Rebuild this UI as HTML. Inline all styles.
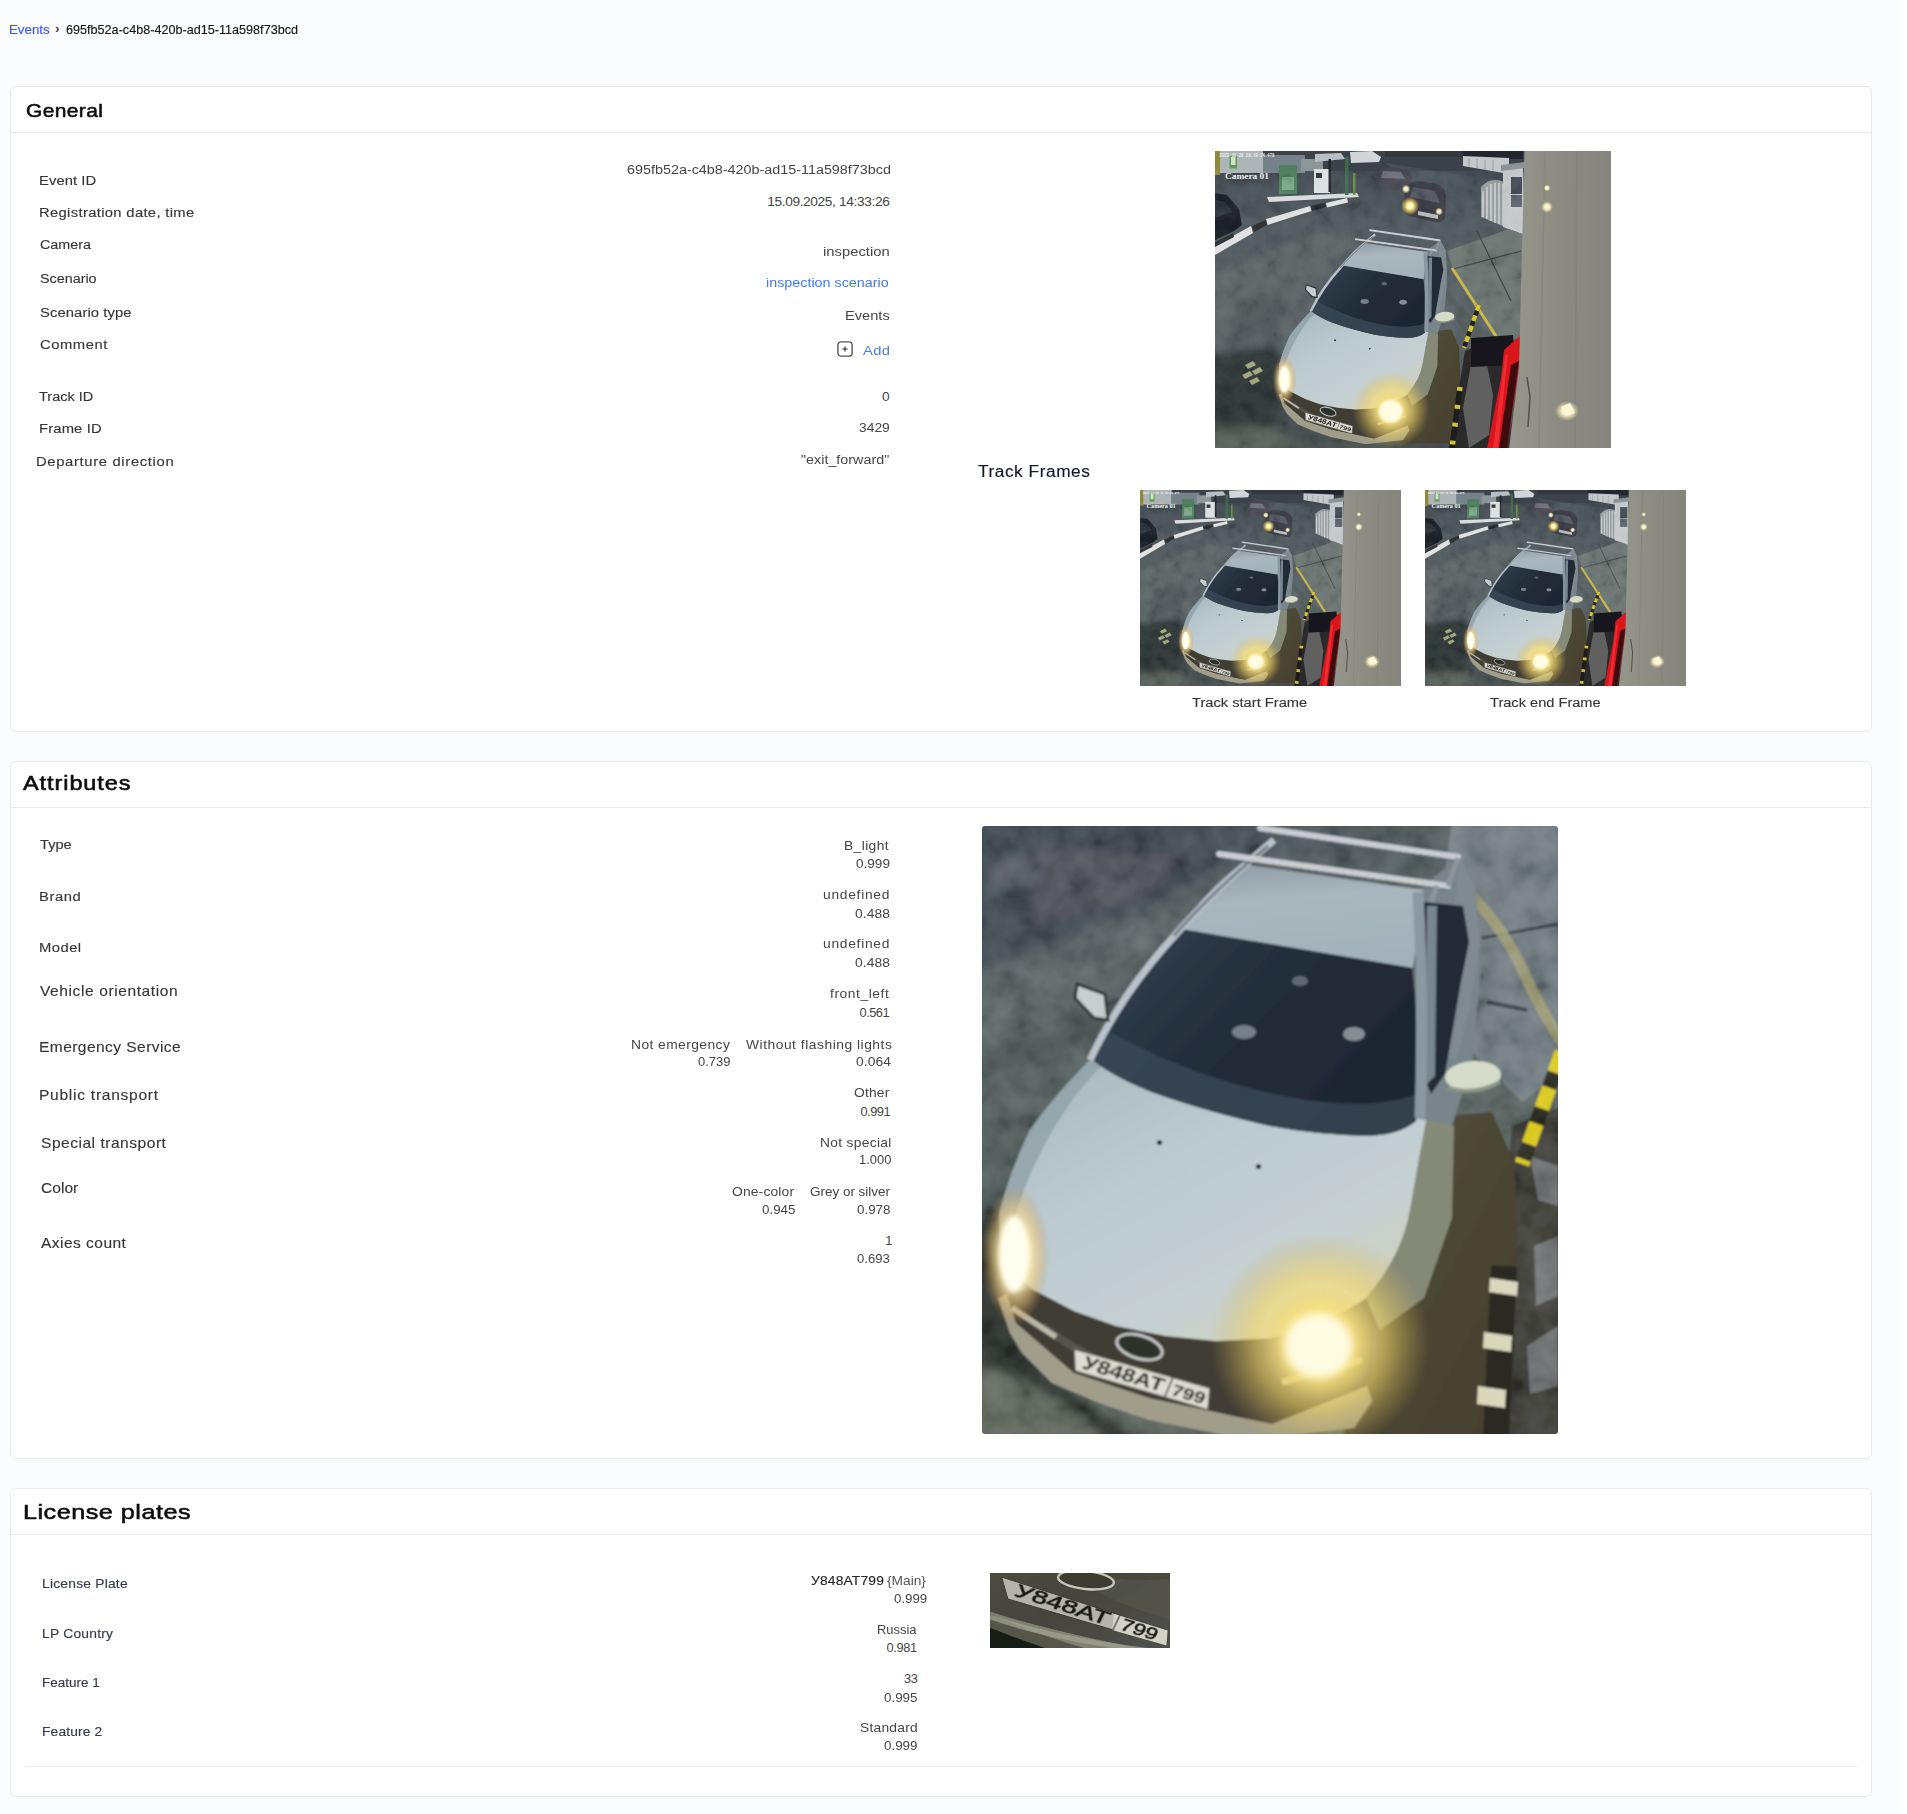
<!DOCTYPE html>
<html lang="en"><head><meta charset="utf-8"><title>Event</title>
<style>
html,body{margin:0;padding:0}
body{width:1907px;height:1814px;position:relative;overflow:hidden;background:#fff;font-family:"Liberation Sans",sans-serif;}
.bg{position:absolute;left:0;top:0;width:1901px;height:1814px;background:#fbfcfe}
.card{position:absolute;left:10px;width:1860px;background:#fff;border:1px solid #e9e9ea;border-radius:6px;}
.hl{position:absolute;height:1px;background:#e9e9ea}
.t{position:absolute;white-space:nowrap;line-height:1;transform-origin:0 0;}
.img{position:absolute;display:block}

</style></head><body>
<svg width="0" height="0" style="position:absolute">
<defs>
<filter id="b06" x="-5%" y="-5%" width="110%" height="110%"><feGaussianBlur stdDeviation="0.6"/></filter>
<filter id="b1" x="-20%" y="-20%" width="140%" height="140%"><feGaussianBlur stdDeviation="1.2"/></filter>
<filter id="b2" x="-30%" y="-30%" width="160%" height="160%"><feGaussianBlur stdDeviation="2.5"/></filter>
<filter id="b4" x="-40%" y="-40%" width="180%" height="180%"><feGaussianBlur stdDeviation="5"/></filter>
<filter id="b8" x="-50%" y="-50%" width="200%" height="200%"><feGaussianBlur stdDeviation="9"/></filter>
<filter id="b16" x="-50%" y="-50%" width="200%" height="200%"><feGaussianBlur stdDeviation="16"/></filter>
<filter id="nzL" x="0" y="0" width="100%" height="100%"><feTurbulence type="fractalNoise" baseFrequency="0.035" numOctaves="3" seed="7"/><feColorMatrix type="matrix" values="1.6 0 0 0 -0.3  1.6 0 0 0 -0.3  1.6 0 0 0 -0.3  0 0 0 0 1"/></filter>
<filter id="nzS" x="0" y="0" width="100%" height="100%"><feTurbulence type="fractalNoise" baseFrequency="0.06" numOctaves="3" seed="5"/><feColorMatrix type="matrix" values="1.6 0 0 0 -0.3  1.6 0 0 0 -0.3  1.6 0 0 0 -0.3  0 0 0 0 1"/></filter>
<filter id="nzH" x="0" y="0" width="100%" height="100%"><feTurbulence type="fractalNoise" baseFrequency="0.55" numOctaves="2" seed="11"/><feColorMatrix type="matrix" values="1.4 0 0 0 -0.2  1.4 0 0 0 -0.2  1.4 0 0 0 -0.2  0 0 0 0 1"/></filter>
<radialGradient id="glowY"><stop offset="0" stop-color="#fffef0"/><stop offset="0.35" stop-color="#fff2a0"/><stop offset="0.7" stop-color="#f0d060" stop-opacity="0.55"/><stop offset="1" stop-color="#e8c850" stop-opacity="0"/></radialGradient>
<radialGradient id="glowW"><stop offset="0" stop-color="#fffff4"/><stop offset="0.45" stop-color="#fff6c8" stop-opacity="0.9"/><stop offset="1" stop-color="#f0e0a0" stop-opacity="0"/></radialGradient>
<linearGradient id="wallG" x1="0" x2="1" y1="0" y2="0"><stop offset="0" stop-color="#96968c"/><stop offset="0.5" stop-color="#8b8b82"/><stop offset="1" stop-color="#84847c"/></linearGradient>
<linearGradient id="gndG" x1="0" x2="0" y1="0" y2="1"><stop offset="0" stop-color="#3b434a"/><stop offset="0.25" stop-color="#4d565b"/><stop offset="0.6" stop-color="#576062"/><stop offset="1" stop-color="#3f4749"/></linearGradient>
<linearGradient id="hoodS" x1="0" x2="1" y1="0" y2="1"><stop offset="0" stop-color="#b3c0c4"/><stop offset="0.45" stop-color="#d3d8d8"/><stop offset="1" stop-color="#e4e0c4"/></linearGradient>
<linearGradient id="cgnd" x1="0" x2="0.3" y1="0" y2="1"><stop offset="0" stop-color="#3c434c"/><stop offset="0.3" stop-color="#505a5a"/><stop offset="0.7" stop-color="#545f5c"/><stop offset="1" stop-color="#555e56"/></linearGradient>
<linearGradient id="choodL" x1="0.1" x2="0.9" y1="0" y2="1"><stop offset="0" stop-color="#a9b8bf"/><stop offset="0.35" stop-color="#bccacf"/><stop offset="0.7" stop-color="#c6d0d2"/><stop offset="1" stop-color="#d6d2b0"/></linearGradient>
<linearGradient id="croof" x1="0" x2="0.2" y1="0" y2="1"><stop offset="0" stop-color="#8f9ba4"/><stop offset="0.4" stop-color="#a9b6be"/><stop offset="1" stop-color="#a3b2ba"/></linearGradient>
<linearGradient id="cglass" x1="0" x2="1" y1="0.2" y2="0.8"><stop offset="0" stop-color="#33414f"/><stop offset="0.4" stop-color="#242e3a"/><stop offset="1" stop-color="#1d2530"/></linearGradient>
<linearGradient id="cside" x1="0" x2="1" y1="0" y2="1"><stop offset="0" stop-color="#5c5d50"/><stop offset="0.45" stop-color="#4c4735"/><stop offset="1" stop-color="#454030"/></linearGradient>
<radialGradient id="cglowR"><stop offset="0" stop-color="#fffff2"/><stop offset="0.3" stop-color="#fff6b0"/><stop offset="0.6" stop-color="#f4d868" stop-opacity="0.7"/><stop offset="1" stop-color="#d8b850" stop-opacity="0"/></radialGradient>
<radialGradient id="cglowL"><stop offset="0" stop-color="#fffff4"/><stop offset="0.4" stop-color="#fff2c0" stop-opacity="0.95"/><stop offset="0.75" stop-color="#e8c070" stop-opacity="0.45"/><stop offset="1" stop-color="#c09050" stop-opacity="0"/></radialGradient>
<g id="carBody">
 <!-- car side in shadow -->
 <path d="M430 330 l30 -40 l50 -4 l22 50 l4 90 l-16 186 l-160 0 l18 -50 l0 -86 l34 -52z" fill="url(#cside)"/>
 <path d="M436 64 l42 -34 l16 30 l4 90 l-8 86 l-20 64 l-27 36 l-7 -44z" fill="#79858b"/>
 <path d="M478 30 l14 30 l6 60 l-10 60 l-14 56 l-14 -10 l10 -120z" fill="#7f8b91"/>
 <!-- side glass -->
 <path d="M441 76 l40 4 l6 36 l-8 40 l-16 92 l-14 20 l-8 -20z" fill="#222a34"/>
 <path d="M445 80 l10 0 l-2 170 l-10 10z" fill="#8696a0" opacity="0.85"/>
 <!-- bumper lip + grille -->
 <path d="M25 468 L33.500 496.600 L92 547 L167.500 572 L290 598 L385 560 L390 575 L372 602 L266 614 L167 594 L117 577 L70 557 L40 527 L28 507 L16 472 Z" fill="#a09e8b"/>
 <path d="M50 463 L92 485 L134 500 L184 510 L234 515 L288 512 L340 492 L395 470 L390 540 L385 560 L290 598 L167.500 572 L92 547 L33.500 496.600 L25 468 Z" fill="#413d35"/>
 <path d="M60 500 q60 44 130 62" stroke="#57544a" stroke-width="8" fill="none"/>
 <path d="M30 482 L74 511" stroke="#bbbaa8" stroke-width="5.500" fill="none"/>
 <path d="M300 556 l80 -22" stroke="#b7b294" stroke-width="6" fill="none"/>
 <path d="M444 294 L472 300 L470 392 L442 472 L398 504 L384 472 Q420 430 428 384 Z" fill="#858a78"/>
 <!-- hood -->
 <path d="M109 233 Q72 270 48 304 Q28 345 18 385 Q14 432 50 463 L92 485 L134 500 L184 510 L234 515 L288 512 Q340 500 384 472 Q420 430 428 384 L444 294 Z" fill="url(#choodL)"/>
 <path d="M109 233 Q72 270 48 304 Q28 345 18 385 Q16 415 24 436 Q30 380 62 320 Q90 268 120 240 Z" fill="#8e9da4" opacity="0.75"/>
 <!-- windshield -->
 <path d="M200 103 L430 141 Q440 221 434 295 Q418 309 384 310 Q330 308 288 300 Q218 284 167 265 Q130 250 109 233 Q140 160 200 103 Z" fill="url(#cglass)"/>
 <path d="M109 233 Q130 250 167 265 Q218 284 288 300 Q330 308 384 310 Q418 309 434 295 L435 268 Q400 282 340 276 Q230 262 128 206 Z" fill="#3b4856" opacity="0.8"/>
 <ellipse cx="262" cy="206" rx="12" ry="7" fill="#9aa4ac" opacity="0.7"/><ellipse cx="372" cy="208" rx="11" ry="7" fill="#a8b0b4" opacity="0.75"/><ellipse cx="318" cy="155" rx="8" ry="5" fill="#8a949c" opacity="0.6"/>
 <!-- roof -->
 <path d="M259 38 l182 26 l-10 78 l-231 -39 q20 -36 59 -65z" fill="url(#croof)"/>
 <path d="M292 14 q-60 50 -96 92 q-56 60 -88 128" stroke="#b9c2ca" stroke-width="7" fill="none"/>
 <path d="M286 20 q-60 50 -94 90" stroke="#5a646c" stroke-width="3" fill="none" opacity="0.7"/>
 <path d="M436 66 q6 110 2 226" stroke="#8a98a2" stroke-width="11" fill="none"/>
 <!-- roof bars -->
 <path d="M278 2 l198 29 M237 28 l229 32" stroke="#c9ced2" stroke-width="6" stroke-linecap="round" fill="none"/>
 <path d="M278 6 l198 29 M237 32 l229 32" stroke="#5e666c" stroke-width="2" fill="none" opacity="0.7"/>
 <path d="M466 60 l10 -28 M455 60 l-6 16" stroke="#8d969c" stroke-width="5" fill="none"/>
 <!-- mirrors -->
 <path d="M95 158 l28 10 l3 26 l-14 -2 l-19 -20z" fill="#c5cfcf" stroke="#2f3538" stroke-width="3"/>
 <ellipse cx="491" cy="250" rx="28" ry="15" fill="#d5dcc9" transform="rotate(-4 491 250)"/>
 <path d="M466 262 q26 8 52 -6" stroke="#8c9686" stroke-width="4" fill="none"/>
 <!-- hood dots -->
 <circle cx="177.500" cy="316.500" r="2.600" fill="#1c2228"/><circle cx="276.500" cy="340.500" r="2.600" fill="#1c2228"/>
 <!-- logo + plate -->
 <ellipse cx="157.500" cy="521" rx="23.500" ry="11.500" fill="#2e302b" stroke="#c2c6c4" stroke-width="3" transform="rotate(17 157.500 521)"/>
 <path d="M92 523 L228 562 L226 584 L93 545 Z" fill="#dcdcd2" stroke="#55554b" stroke-width="1.500"/>
 <g transform="translate(99 542) rotate(16.500) skewX(-6)"><text x="0" y="0" font-family="Liberation Sans, sans-serif" font-weight="700" font-size="19" fill="#20201d" textLength="84" lengthAdjust="spacingAndGlyphs">У848АТ</text><text x="93" y="0" font-family="Liberation Sans, sans-serif" font-weight="700" font-size="16" fill="#20201d" textLength="34" lengthAdjust="spacingAndGlyphs">799</text><path d="M89 -17 l0 21" stroke="#444" stroke-width="1.500"/></g>
</g>
<g id="carGlow">
 <!-- glows -->
 <circle cx="338" cy="516" r="110" fill="url(#cglowR)" opacity="0.85"/>
 <circle cx="338" cy="518" r="58" fill="url(#cglowR)"/>
 <ellipse cx="336" cy="520" rx="34" ry="32" fill="#fffce4" filter="url(#b4)"/>
 <ellipse cx="33" cy="430" rx="34" ry="70" fill="url(#cglowL)"/>
 <ellipse cx="32" cy="428" rx="14" ry="38" fill="#fffff0" filter="url(#b2)"/>
</g>

<clipPath id="sceneClip"><rect x="0" y="0" width="396" height="297"/></clipPath>

<symbol id="scene" viewBox="0 0 396 297" preserveAspectRatio="none">
<g clip-path="url(#sceneClip)">
<g filter="url(#b06)">
 <rect x="-2" y="-2" width="400" height="301" fill="url(#gndG)"/>
 <!-- far background -->
 <rect x="-2" y="-2" width="310" height="22" fill="#3a434a"/>
 <rect x="0" y="0" width="48" height="22" fill="#aeb5b7"/>
 <rect x="14.500" y="4" width="7.500" height="13.500" fill="#5f9a58"/>
 <rect x="16" y="6" width="4.500" height="8" fill="#cfe3c8"/>
 <rect x="0" y="0" width="5" height="24" fill="#8f8a3a"/>
 <rect x="48" y="4" width="42" height="18" fill="#76828a"/>
 <rect x="86" y="8" width="22" height="12" fill="#8c979a"/>
 <path d="M100 3 l26 -1 l4 6 l-30 3z" fill="#b9bec2"/>
 <path d="M135 1 l22 -1 l9 6 l-2 5 l-28 1z" fill="#d2d6da"/>
 <rect x="170" y="0" width="80" height="6" fill="#30373d"/>
 <rect x="248" y="0" width="60" height="8" fill="#23282d"/>
 <path d="M248 5 l46 2 l0 16 l-46 -8z" fill="#c4c8cb"/>
 <path d="M254 8 l0 8 M262 8 l0 9 M270 9 l0 10 M278 9 l0 11" stroke="#8b9094" stroke-width="0.800" fill="none"/>
 <path d="M170 12 l90 14 l30 40 l-20 6 l-60 -30z" fill="#4c555b" opacity="0.7"/>
 <!-- left parked dark car -->
 <path d="M-2 42 l14 2 l12 14 l3 16 l-8 6 l-21 10z" fill="#1c2027"/>
 <path d="M-2 48 l12 3 l8 10 l-20 6z" fill="#2b323b"/>
 <!-- pump island + pumps -->
 <path d="M52 46 l90 -4 l2 4 l-90 5z" fill="#d8dadb"/>
 <path d="M0 95 l36 -20 l2 7 l-38 22z" fill="#dfe1e1"/>
 <path d="M0 91 l18 -9 l1 4 l-19 10z" fill="#2a2d30"/>
 <path d="M51 68 l44 -13 l1.5 5 l-44 14z" fill="#dfe1e1"/>
 <path d="M111 52 l21 -5 l1 4.5 l-21 5z" fill="#dfe1e1"/>
 <path d="M37 75 l14 -6 l1 5 l-13 7z M96 55 l14 -3.5 l1 4.5 l-14 4z" fill="#2a2d30"/>
 <rect x="64" y="14" width="18" height="29" fill="#4f7f5f"/>
 <rect x="67" y="26" width="12" height="13" fill="#7fa88a"/>
 <rect x="99" y="18" width="16" height="24" fill="#dcdfe0"/>
 <rect x="101" y="22" width="6" height="5" fill="#33383c"/>
 <rect x="113.500" y="8" width="2.500" height="33" fill="#23282c"/>
 <rect x="130" y="6" width="3.500" height="38" fill="#3d6b4c"/>
 <rect x="138" y="22" width="2.500" height="22" fill="#5d8a3c"/>
 <!-- cars in the middle distance -->
 <path d="M162 24 q2 -8 14 -8 l14 2 q6 2 7 8 l-2 12 l-30 2z" fill="#47464f"/>
 <path d="M168 20 l18 1 l4 7 l-24 -1z" fill="#6a6c78"/>
 <path d="M190 40 q2 -10 14 -10 l18 3 q8 3 9 12 l-1 22 q-2 5 -10 4 l-26 -6 q-5 -2 -5 -8z" fill="#3a3b44"/>
 <path d="M198 36 l22 4 l5 12 l-30 -6z" fill="#555864"/>
 <path d="M203 60 l20 4 l0 4 l-20 -4z" fill="#b7b9b9"/>
 <!-- fence / booth -->
 <path d="M266 36 q12 -12 24 -4 l0 44 l-24 -10z" fill="#aeb2b4" opacity="0.75"/>
 <path d="M268 40 l0 26 M272 36 l0 32 M276 33 l0 37 M280 32 l0 40 M284 32 l0 41 M288 33 l0 41" stroke="#e4e6e6" stroke-width="1.100" fill="none"/>
 <path d="M288 18 l20 -2 l2 68 l-22 -8z" fill="#c3c7ca"/>
 <rect x="296" y="26" width="11" height="17" fill="#454c54"/>
 <rect x="296" y="44" width="11" height="12" fill="#59616a"/>
 <path d="M286 14 l24 -3 l0 6 l-24 3z" fill="#8d9296"/>
 <!-- concrete slab right of car -->
 <path d="M232 100 l62 -22 l16 6 l-2 104 l-28 0 l-42 -70z" fill="#69726f"/>
 <path d="M238 118 l68 -18 M262 80 l34 70" stroke="#3a4244" stroke-width="1.200" fill="none"/>
 <path d="M238 150 l44 38 l-30 2 l-10 -20z" fill="#525a5a"/>
 <!-- ground tints -->
 <g filter="url(#b4)">
 <path d="M0 120 l110 -40 l40 6 l-70 60 l-80 40z" fill="#626b6a" opacity="0.5"/>
 <path d="M-10 205 l70 -10 l14 40 l-10 36 l-40 16 l-34 0z" fill="#2a3231" opacity="0.95"/>
 <path d="M-10 280 l60 -6 l60 30 l-120 0z" fill="#58625a" opacity="0.9"/>
 <path d="M60 290 l140 0 l0 14 l-140 0z" fill="#474f4c"/>
 <path d="M20 150 l60 -20 l-20 50 l-50 20z" fill="#4a5355" opacity="0.7"/>
 </g>
 <path d="M30 214 l8 -4 l3 4 l-8 4z M37 220 l8 -4 l3 4 l-8 4z M27 224 l8 -4 l3 4 l-8 4z M34 230 l8 -4 l3 4 l-8 4z" fill="#9fa37c"/>
 <rect x="0" y="20" width="310" height="277" filter="url(#nzS)" style="mix-blend-mode:soft-light" opacity="0.2"/>
 <g transform="translate(58 78.500) scale(0.3497)"><use href="#carBody"/></g>
 <!-- yellow line + striped pole -->
 <path d="M237 117 l44 68" stroke="#c9b948" stroke-width="3" fill="none"/>
 <path d="M264 154 l-15 43" stroke="#222" stroke-width="4.500" fill="none"/>
 <path d="M264 154 l-15 43" stroke="#d8c62e" stroke-width="4.500" stroke-dasharray="6 5" fill="none"/>
 <!-- dark wet area + bollards -->
 <path d="M250 200 l30 -14 l20 4 l-6 107 l-60 0z" fill="#2b2c2b"/>
 <path d="M256 214 l16 0 l6 30 l-4 40 l-20 13 l-6 -40z" fill="#6d6f6c" opacity="0.8"/>
 <path d="M245 236 l-8 61" stroke="#1d1d1b" stroke-width="5.500" fill="none"/>
 <path d="M245 236 l-8 61" stroke="#d3c238" stroke-width="5.500" stroke-dasharray="4 14" fill="none"/>
 <path d="M256 187 l42 -3 l2 30 l-44 2z" fill="#15161a"/>
 <!-- red barrier -->
 <path d="M289 199 l17 -15 l2 6 l-4 26 l-12 81 l-20 0 l14 -70z" fill="#d8121f"/>
 <path d="M290 205 l3 -2 l-10 94 l-5 0z" fill="#ff3a3a" opacity="0.65"/>
 <path d="M296 214 l8 -4 l-12 87 l-8 0z" fill="#23100f" opacity="0.85"/>
 <!-- wall -->
 <path d="M309.500 -2 l90 0 l0 301 l-105.500 0 l10 -82z" fill="url(#wallG)"/>
 <path d="M330 0 l-6 297 M362 0 l-2 297" stroke="#7d7d75" stroke-width="1.500" opacity="0.5" fill="none"/>
 <path d="M312 226 l3 20 l-2 30" stroke="#55554e" stroke-width="1.600" fill="none"/>
</g>
 <g transform="translate(58 78.500) scale(0.3497)"><use href="#carGlow"/></g>
 <!-- glows -->
 <circle cx="195" cy="55" r="9" fill="url(#glowY)"/>
 <circle cx="224" cy="60.500" r="4" fill="url(#glowW)"/>
 <circle cx="191" cy="38" r="4.500" fill="url(#glowW)"/>
 <circle cx="332" cy="56" r="6" fill="url(#glowW)"/>
 <circle cx="332" cy="37" r="3.500" fill="url(#glowW)"/>
 <ellipse cx="352" cy="260" rx="12" ry="10" fill="url(#glowW)"/>
 <path d="M346 256 l9 -4 l5 10 l-8 2z" fill="#fff8d8" filter="url(#b06)"/>
 <!-- overlay text -->
 <text x="10" y="27.500" font-family="Liberation Serif, serif" font-weight="700" font-size="8.600" fill="#f4f4f4" textLength="44" lengthAdjust="spacingAndGlyphs">Camera 01</text>
 <text x="4.500" y="5.500" font-family="Liberation Mono, monospace" font-weight="700" font-size="4.600" fill="#f0f0f0" textLength="55" lengthAdjust="spacingAndGlyphs">2022-09-28 18:19:24.478</text>
</g>
</symbol>
</defs>
</svg>

<div class="bg"></div>
<div class="card" style="top:86px;height:644px"></div>
<div class="hl" style="left:11px;width:1860px;top:132px"></div>
<div class="card" style="top:761px;height:696px"></div>
<div class="hl" style="left:11px;width:1860px;top:807px"></div>
<div class="card" style="top:1488px;height:307px"></div>
<div class="hl" style="left:11px;width:1860px;top:1534px"></div>
<div class="hl" style="left:25px;width:1832px;top:1766px"></div>
<svg class="img" style="left:837.4px;top:341px" width="16" height="16" viewBox="0 0 16 16"><rect x="0.9" y="0.9" width="14.2" height="14.2" rx="3.2" fill="none" stroke="#555" stroke-width="1.4"/><path d="M8 5.4v5.2M5.4 8h5.200" stroke="#333" stroke-width="1.2" fill="none"/></svg>
<svg class="img" style="left:1215px;top:151px" width="396" height="297"><use href="#scene" width="396" height="297"/></svg>
<svg class="img" style="left:1140px;top:490px" width="261" height="196"><use href="#scene" width="261" height="196"/></svg>
<svg class="img" style="left:1425px;top:490px" width="261" height="196"><use href="#scene" width="261" height="196"/></svg>
<svg class="img" style="left:982px;top:826px;border-radius:3px" width="576" height="608" viewBox="0 0 576 608">
<g filter="url(#b1)">

 <rect x="-4" y="-4" width="584" height="616" fill="url(#cgnd)"/>
 <!-- asphalt patches (left) -->
 <g filter="url(#b4)">
 <path d="M-4 -4 l280 0 l-60 60 l-220 90z" fill="#3b424b" opacity="0.85"/>
 <path d="M60 20 l140 10 l-30 40 l-120 30z" fill="#57545a" opacity="0.55"/>
 <path d="M10 30 l60 -4 l-10 30 l-50 10z" fill="#5b606c" opacity="0.6"/>
 <path d="M-4 150 l200 -70 l20 20 l-220 110z" fill="#5e6867" opacity="0.6"/>
 <path d="M-4 235 l150 -60 l10 14 l-160 66z" fill="#3c4445" opacity="0.6"/>
 <path d="M-4 330 l100 -40 l-40 100 l-60 30z" fill="#4a5453" opacity="0.7"/>
 <path d="M-8 400 l30 -20 l-6 80 l30 70 l60 50 l60 40 l-174 0z" fill="#272b29" opacity="0.95"/>
 <path d="M-8 540 l40 10 l70 40 l20 30 l-130 0z" fill="#5b6459"/>
 </g>
 <path d="M120 180 l60 -22" stroke="#3d4546" stroke-width="5" fill="none" opacity="0.7"/>
 <!-- concrete right -->
 <path d="M470 -4 l110 0 l0 250 l-40 30 l-60 -60 l-20 -150z" fill="#6c777b"/>
 <path d="M500 112 l76 -14" stroke="#333b3e" stroke-width="3" fill="none"/>
 <path d="M505 176 l40 8" stroke="#333b3e" stroke-width="4" fill="none"/>
 <path d="M486 66 q40 40 60 90 q20 40 34 60" stroke="#9d9b72" stroke-width="11" fill="none" opacity="0.85"/>
 <!-- dark mottled right-bottom -->
 <path d="M530 300 l50 -20 l0 332 l-70 0 l10 -200z" fill="#3a3a35"/>
 <path d="M548 330 l28 10 l0 40 l-20 -6z M552 420 l24 -10 l0 60 l-22 10z M545 520 l31 -20 l0 60 l-28 8z" fill="#76787a" opacity="0.8"/>
 <!-- striped pole -->
 <path d="M580 226 l-40 112" stroke="#26261f" stroke-width="15" fill="none"/>
 <path d="M580 226 l-40 112" stroke="#d9c81f" stroke-width="15" stroke-dasharray="22 16" fill="none"/>
 <rect x="0" y="0" width="576" height="608" filter="url(#nzL)" style="mix-blend-mode:soft-light" opacity="0.38"/>
 <use href="#carBody"/>
 <!-- bollard -->
 <path d="M522 440 l-8 172" stroke="#2a2a24" stroke-width="26" fill="none"/>
 <path d="M508 452 l28 4 l-1 14 l-28 -4z M502 506 l28 4 l-1 16 l-28 -4z M496 560 l28 4 l-1 18 l-28 -4z" fill="#d9d8bd"/>
</g>
 <use href="#carGlow"/>
</svg>
<svg class="img" style="left:990px;top:1573px" width="180" height="75" viewBox="0 0 180 75">
<defs><linearGradient id="lpbg" x1="0" x2="1" y1="0" y2="0.6"><stop offset="0" stop-color="#4c4a40"/><stop offset="0.5" stop-color="#45443c"/><stop offset="1" stop-color="#4e4f48"/></linearGradient></defs>
<g filter="url(#b06)">
 <rect x="-2" y="-2" width="184" height="79" fill="url(#lpbg)"/>
 <path d="M-2 38 q60 20 184 44 l-184 0z" fill="#7f8070"/>
 <path d="M-2 40 q50 22 100 36 l-100 0z" fill="#55574a"/>
 <path d="M-2 54 q30 12 60 22 l-60 0z" fill="#181d16"/>
 <path d="M0 44 q70 24 180 36" stroke="#a3a594" stroke-width="5" fill="none" opacity="0.7"/>
 <path d="M100 0 q30 10 80 6 l0 40 q-40 -10 -70 -26z" fill="#56584f" opacity="0.6"/>
 <ellipse cx="96" cy="7" rx="28" ry="9" fill="#3a3a33" stroke="#c6c6ba" stroke-width="2.400" transform="rotate(6 96 7)"/>
 <path d="M11.600 4 L177.700 57.500 L176.400 72.600 L17.900 26 z" fill="#b4b4aa" stroke="#3d3d35" stroke-width="1"/>
 <path d="M124 41 L177.700 57.500 L176.400 72.600 L122 57 z" fill="#d2d2c8"/>
 <g filter="url(#b06)" transform="translate(23 22.500) rotate(17.600) skewX(-8)"><text x="0" y="0" font-family="Liberation Sans, sans-serif" font-weight="400" font-size="17.500" fill="#15150f" stroke="#15150f" stroke-width="0.500" textLength="98" lengthAdjust="spacingAndGlyphs">У848АТ</text><text x="111" y="0" font-family="Liberation Sans, sans-serif" font-weight="400" font-size="15.500" fill="#15150f" stroke="#15150f" stroke-width="0.400" textLength="38" lengthAdjust="spacingAndGlyphs">799</text><path d="M106 -17 l0 21" stroke="#444" stroke-width="1.300"/></g>
</g>
</svg>

<span class="t" style="left:9.34px;top:23.53px;font-size:12.6px;letter-spacing:0.000px;color:#3a56f5;transform:scaleX(1.0563);-webkit-text-stroke:0.14px;">Events</span>
<span class="t" style="left:55.20px;top:23.33px;font-size:12.6px;letter-spacing:0.000px;color:#333;font-weight:700;">›</span>
<span class="t" style="left:65.80px;top:23.53px;font-size:12.6px;letter-spacing:0.000px;color:#15151a;transform:scaleX(1.0020);-webkit-text-stroke:0.14px;">695fb52a-c4b8-420b-ad15-11a598f73bcd</span>
<span class="t" style="left:25.80px;top:101.22px;font-size:19.0px;letter-spacing:0.342px;color:#0c0c10;transform:scaleX(1.1034);-webkit-text-stroke:0.55px;">General</span>
<span class="t" style="left:23.20px;top:773.81px;font-size:19.6px;letter-spacing:0.763px;color:#0c0c10;transform:scaleX(1.2000);-webkit-text-stroke:0.55px;">Attributes</span>
<span class="t" style="left:23.00px;top:1501.12px;font-size:21.0px;letter-spacing:0.416px;color:#0c0c10;transform:scaleX(1.2000);-webkit-text-stroke:0.55px;">License plates</span>
<span class="t" style="left:38.62px;top:173.90px;font-size:13.7px;letter-spacing:0.062px;color:#363636;transform:scaleX(1.0800);-webkit-text-stroke:0.14px;">Event ID</span>
<span class="t" style="left:38.62px;top:206.10px;font-size:13.7px;letter-spacing:0.309px;color:#363636;transform:scaleX(1.0800);-webkit-text-stroke:0.14px;">Registration date, time</span>
<span class="t" style="left:39.70px;top:238.30px;font-size:13.7px;letter-spacing:0.000px;color:#363636;transform:scaleX(1.0495);-webkit-text-stroke:0.14px;">Camera</span>
<span class="t" style="left:39.70px;top:272.30px;font-size:13.7px;letter-spacing:0.000px;color:#363636;transform:scaleX(1.0476);-webkit-text-stroke:0.14px;">Scenario</span>
<span class="t" style="left:39.70px;top:305.90px;font-size:13.7px;letter-spacing:0.090px;color:#363636;transform:scaleX(1.0800);-webkit-text-stroke:0.14px;">Scenario type</span>
<span class="t" style="left:39.70px;top:338.20px;font-size:13.7px;letter-spacing:0.496px;color:#363636;transform:scaleX(1.0800);-webkit-text-stroke:0.14px;">Comment</span>
<span class="t" style="left:39.40px;top:389.80px;font-size:13.7px;letter-spacing:0.000px;color:#363636;transform:scaleX(1.0581);-webkit-text-stroke:0.14px;">Track ID</span>
<span class="t" style="left:38.52px;top:422.00px;font-size:13.7px;letter-spacing:0.140px;color:#363636;transform:scaleX(1.0800);-webkit-text-stroke:0.14px;">Frame ID</span>
<span class="t" style="left:36.22px;top:454.80px;font-size:13.7px;letter-spacing:0.613px;color:#363636;transform:scaleX(1.0800);-webkit-text-stroke:0.14px;">Departure direction</span>
<span class="t" style="left:626.60px;top:162.90px;font-size:13.7px;letter-spacing:0.000px;color:#454545;transform:scaleX(1.0488);">695fb52a-c4b8-420b-ad15-11a598f73bcd</span>
<span class="t" style="left:767.20px;top:194.90px;font-size:13.7px;letter-spacing:-0.357px;color:#454545;">15.09.2025, 14:33:26</span>
<span class="t" style="left:823.30px;top:244.80px;font-size:13.7px;letter-spacing:0.020px;color:#454545;transform:scaleX(1.0800);">inspection</span>
<span class="t" style="left:766.40px;top:275.90px;font-size:13.7px;letter-spacing:0.000px;color:#3b7bf2;transform:scaleX(1.0463);">inspection scenario</span>
<span class="t" style="left:845.03px;top:308.50px;font-size:13.7px;letter-spacing:0.000px;color:#454545;transform:scaleX(1.0683);">Events</span>
<span class="t" style="left:863.00px;top:343.50px;font-size:13.7px;letter-spacing:0.351px;color:#4a7af7;transform:scaleX(1.0800);">Add</span>
<span class="t" style="left:881.90px;top:389.90px;font-size:13.7px;letter-spacing:0.000px;color:#454545;">0</span>
<span class="t" style="left:859.00px;top:420.90px;font-size:13.7px;letter-spacing:-0.000px;color:#454545;transform:scaleX(1.0122);">3429</span>
<span class="t" style="left:800.80px;top:452.80px;font-size:13.7px;letter-spacing:0.000px;color:#454545;transform:scaleX(1.0472);">&quot;exit_forward&quot;</span>
<span class="t" style="left:977.90px;top:463.66px;font-size:16.0px;letter-spacing:0.503px;color:#10182b;transform:scaleX(1.0800);-webkit-text-stroke:0.14px;">Track Frames</span>
<span class="t" style="left:1192.00px;top:696.10px;font-size:13.7px;letter-spacing:0.000px;color:#363636;transform:scaleX(1.0714);-webkit-text-stroke:0.14px;">Track start Frame</span>
<span class="t" style="left:1489.70px;top:696.10px;font-size:13.7px;letter-spacing:0.000px;color:#363636;transform:scaleX(1.0671);-webkit-text-stroke:0.14px;">Track end Frame</span>
<span class="t" style="left:39.90px;top:837.60px;font-size:13.7px;letter-spacing:0.000px;color:#363636;transform:scaleX(1.0702);-webkit-text-stroke:0.14px;">Type</span>
<span class="t" style="left:39.22px;top:889.90px;font-size:13.7px;letter-spacing:0.531px;color:#363636;transform:scaleX(1.0800);-webkit-text-stroke:0.14px;">Brand</span>
<span class="t" style="left:39.22px;top:940.80px;font-size:13.7px;letter-spacing:0.431px;color:#363636;transform:scaleX(1.0800);-webkit-text-stroke:0.14px;">Model</span>
<span class="t" style="left:39.50px;top:983.81px;font-size:14.4px;letter-spacing:0.545px;color:#363636;transform:scaleX(1.0800);-webkit-text-stroke:0.14px;">Vehicle orientation</span>
<span class="t" style="left:38.82px;top:1040.41px;font-size:14.4px;letter-spacing:0.401px;color:#363636;transform:scaleX(1.0800);-webkit-text-stroke:0.14px;">Emergency Service</span>
<span class="t" style="left:39.02px;top:1087.71px;font-size:14.4px;letter-spacing:0.685px;color:#363636;transform:scaleX(1.0800);-webkit-text-stroke:0.14px;">Public transport</span>
<span class="t" style="left:40.50px;top:1135.61px;font-size:14.4px;letter-spacing:0.479px;color:#363636;transform:scaleX(1.0800);-webkit-text-stroke:0.14px;">Special transport</span>
<span class="t" style="left:40.50px;top:1181.41px;font-size:14.4px;letter-spacing:0.031px;color:#363636;transform:scaleX(1.0800);-webkit-text-stroke:0.14px;">Color</span>
<span class="t" style="left:40.50px;top:1236.31px;font-size:14.4px;letter-spacing:0.422px;color:#363636;transform:scaleX(1.0800);-webkit-text-stroke:0.14px;">Axies count</span>
<span class="t" style="left:844.32px;top:839.66px;font-size:12.8px;letter-spacing:0.361px;color:#454545;transform:scaleX(1.0800);">B_light</span>
<span class="t" style="left:855.60px;top:857.76px;font-size:12.8px;letter-spacing:0.000px;color:#454545;transform:scaleX(1.0593);">0.999</span>
<span class="t" style="left:823.10px;top:889.26px;font-size:12.8px;letter-spacing:0.661px;color:#454545;transform:scaleX(1.0800);">undefined</span>
<span class="t" style="left:854.50px;top:907.66px;font-size:12.8px;letter-spacing:0.102px;color:#454545;transform:scaleX(1.0800);">0.488</span>
<span class="t" style="left:823.10px;top:938.46px;font-size:12.8px;letter-spacing:0.661px;color:#454545;transform:scaleX(1.0800);">undefined</span>
<span class="t" style="left:854.50px;top:956.86px;font-size:12.8px;letter-spacing:0.102px;color:#454545;transform:scaleX(1.0800);">0.488</span>
<span class="t" style="left:830.20px;top:988.36px;font-size:12.8px;letter-spacing:0.508px;color:#454545;transform:scaleX(1.0800);">front_left</span>
<span class="t" style="left:859.60px;top:1006.76px;font-size:12.8px;letter-spacing:-0.527px;color:#454545;">0.561</span>
<span class="t" style="left:630.92px;top:1038.66px;font-size:12.8px;letter-spacing:0.395px;color:#454545;transform:scaleX(1.0800);">Not emergency</span>
<span class="t" style="left:698.10px;top:1055.96px;font-size:12.8px;letter-spacing:-0.000px;color:#454545;transform:scaleX(1.0123);">0.739</span>
<span class="t" style="left:745.50px;top:1038.66px;font-size:12.8px;letter-spacing:0.480px;color:#454545;transform:scaleX(1.0800);">Without flashing lights</span>
<span class="t" style="left:856.10px;top:1055.96px;font-size:12.8px;letter-spacing:0.079px;color:#454545;transform:scaleX(1.0800);">0.064</span>
<span class="t" style="left:854.40px;top:1086.96px;font-size:12.8px;letter-spacing:0.171px;color:#454545;transform:scaleX(1.0800);">Other</span>
<span class="t" style="left:860.40px;top:1105.56px;font-size:12.8px;letter-spacing:-0.452px;color:#454545;">0.991</span>
<span class="t" style="left:820.02px;top:1136.56px;font-size:12.8px;letter-spacing:0.280px;color:#454545;transform:scaleX(1.0800);">Not special</span>
<span class="t" style="left:858.50px;top:1154.46px;font-size:12.8px;letter-spacing:0.000px;color:#454545;transform:scaleX(1.0092);">1.000</span>
<span class="t" style="left:732.00px;top:1186.16px;font-size:12.8px;letter-spacing:0.153px;color:#454545;transform:scaleX(1.0800);">One-color</span>
<span class="t" style="left:761.50px;top:1204.06px;font-size:12.8px;letter-spacing:0.000px;color:#454545;transform:scaleX(1.0437);">0.945</span>
<span class="t" style="left:809.90px;top:1186.16px;font-size:12.8px;letter-spacing:0.000px;color:#454545;transform:scaleX(1.0518);">Grey or silver</span>
<span class="t" style="left:857.40px;top:1204.06px;font-size:12.8px;letter-spacing:0.000px;color:#454545;transform:scaleX(1.0437);">0.978</span>
<span class="t" style="left:885.20px;top:1234.86px;font-size:12.8px;letter-spacing:0.000px;color:#454545;">1</span>
<span class="t" style="left:856.80px;top:1253.36px;font-size:12.8px;letter-spacing:0.000px;color:#454545;transform:scaleX(1.0217);">0.693</span>
<span class="t" style="left:42.12px;top:1578.46px;font-size:12.8px;letter-spacing:0.203px;color:#343a4c;transform:scaleX(1.0800);-webkit-text-stroke:0.14px;">License Plate</span>
<span class="t" style="left:42.12px;top:1628.26px;font-size:12.8px;letter-spacing:0.215px;color:#343a4c;transform:scaleX(1.0800);-webkit-text-stroke:0.14px;">LP Country</span>
<span class="t" style="left:42.45px;top:1676.86px;font-size:12.8px;letter-spacing:0.000px;color:#343a4c;transform:scaleX(1.0530);-webkit-text-stroke:0.14px;">Feature 1</span>
<span class="t" style="left:42.42px;top:1726.26px;font-size:12.8px;letter-spacing:0.122px;color:#343a4c;transform:scaleX(1.0800);-webkit-text-stroke:0.14px;">Feature 2</span>
<span class="t" style="left:810.50px;top:1574.96px;font-size:12.8px;letter-spacing:0.156px;color:#262626;transform:scaleX(1.0800);-webkit-text-stroke:0.14px;">У848АТ799</span>
<span class="t" style="left:887.10px;top:1574.96px;font-size:12.8px;letter-spacing:0.000px;color:#555;transform:scaleX(1.0727);">{Main}</span>
<span class="t" style="left:893.70px;top:1593.36px;font-size:12.8px;letter-spacing:0.000px;color:#454545;transform:scaleX(1.0374);">0.999</span>
<span class="t" style="left:876.69px;top:1624.26px;font-size:12.8px;letter-spacing:-0.000px;color:#454545;transform:scaleX(1.0103);">Russia</span>
<span class="t" style="left:886.50px;top:1641.66px;font-size:12.8px;letter-spacing:-0.327px;color:#454545;">0.981</span>
<span class="t" style="left:904.00px;top:1672.86px;font-size:12.8px;letter-spacing:-0.417px;color:#454545;">33</span>
<span class="t" style="left:884.30px;top:1691.56px;font-size:12.8px;letter-spacing:0.000px;color:#454545;transform:scaleX(1.0468);">0.995</span>
<span class="t" style="left:859.50px;top:1722.36px;font-size:12.8px;letter-spacing:0.216px;color:#454545;transform:scaleX(1.0800);">Standard</span>
<span class="t" style="left:884.00px;top:1739.76px;font-size:12.8px;letter-spacing:0.000px;color:#454545;transform:scaleX(1.0468);">0.999</span>
</body></html>
